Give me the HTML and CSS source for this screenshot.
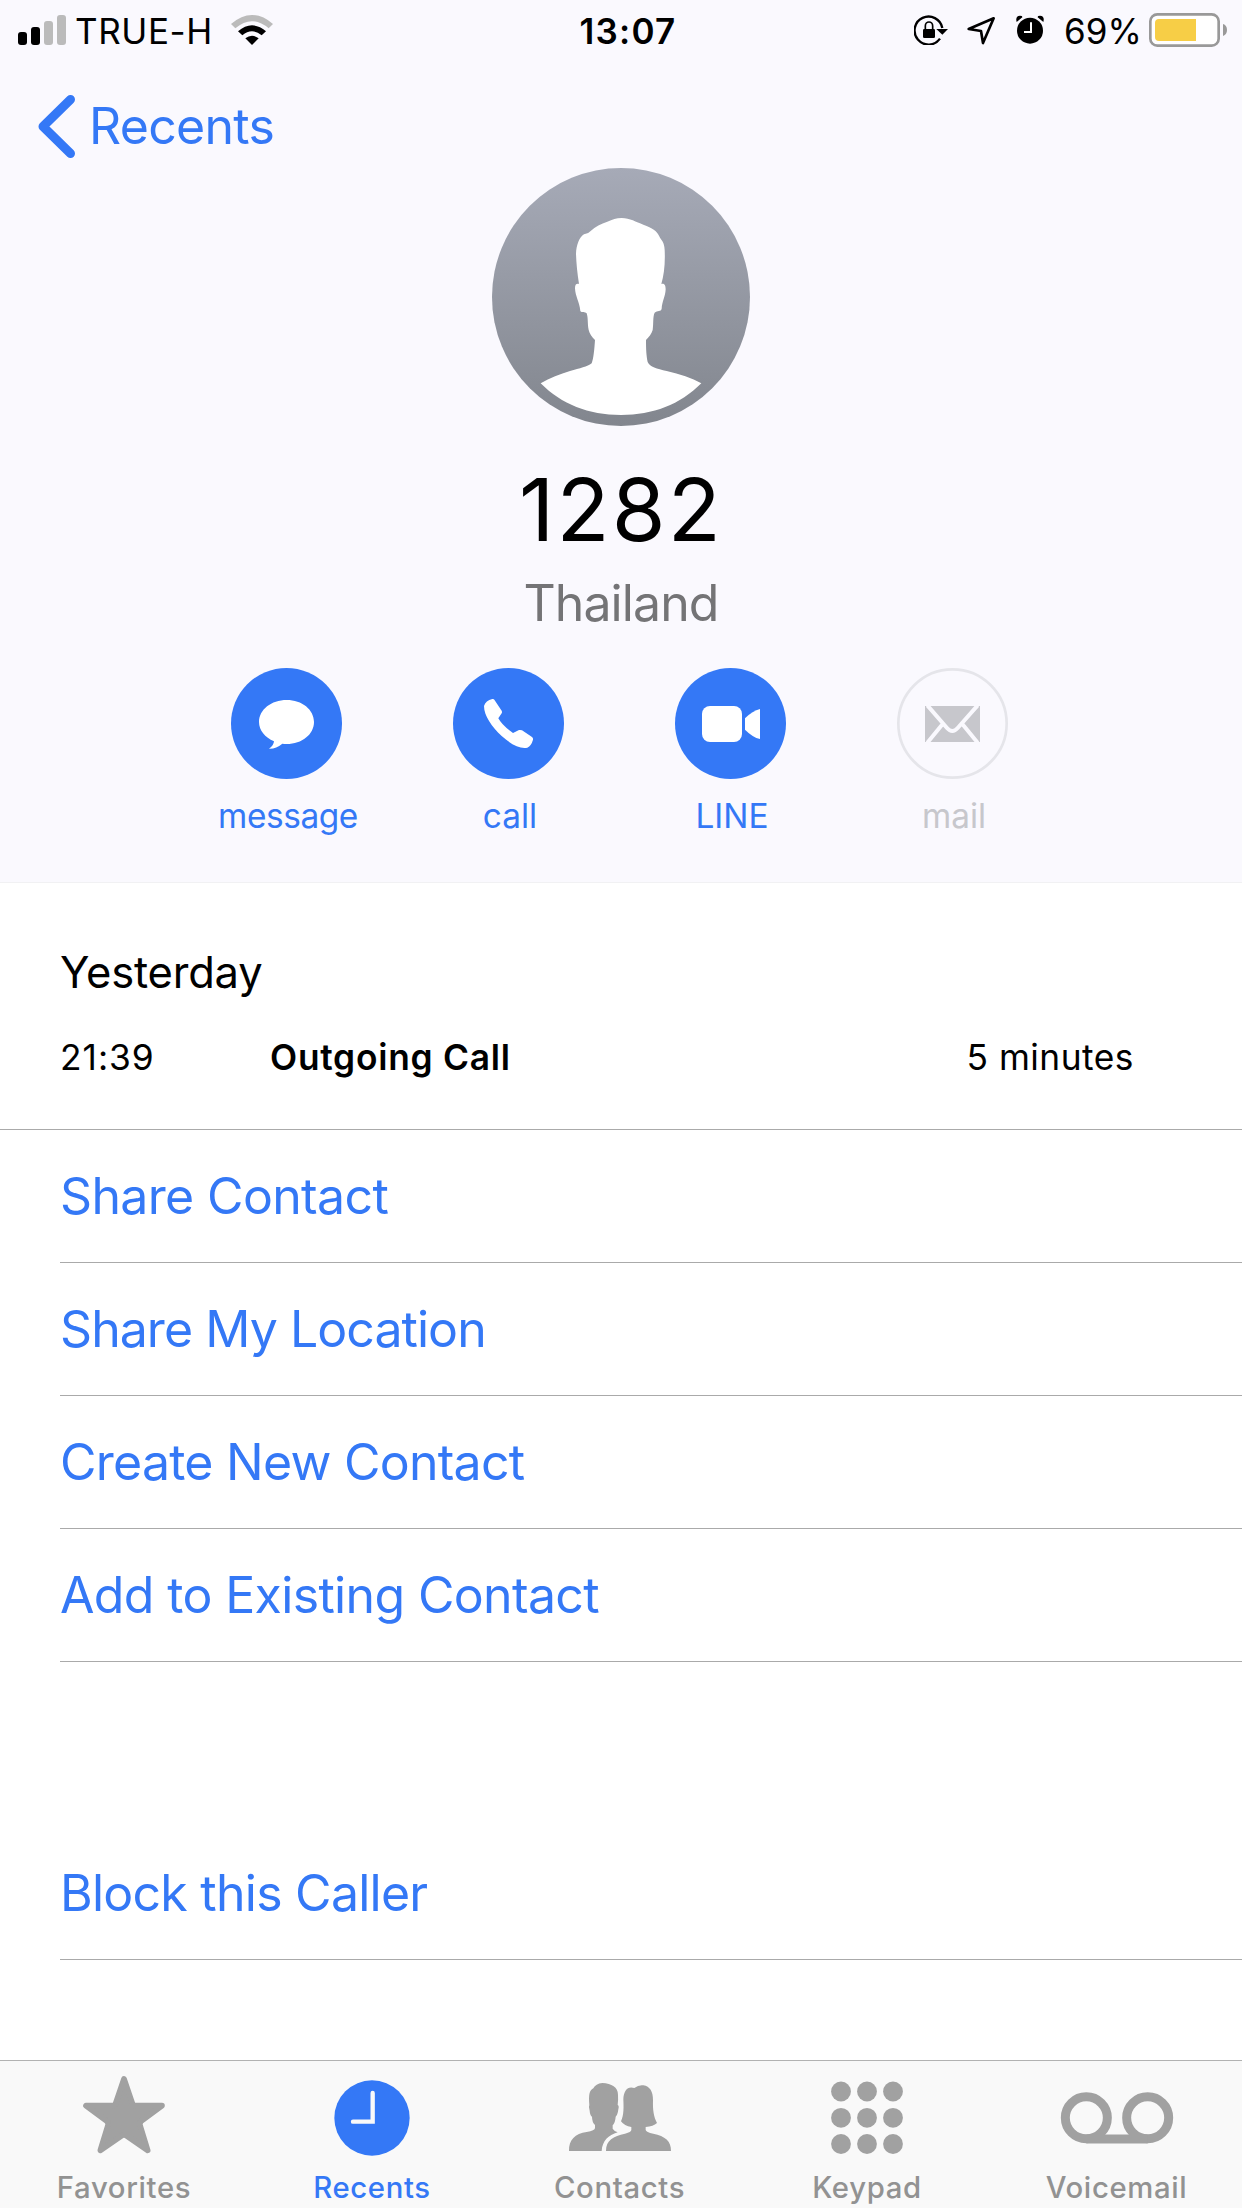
FILE: index.html
```
<!DOCTYPE html>
<html lang="en">
<head>
<meta charset="UTF-8">
<meta name="viewport" content="width=device-width, initial-scale=1.0">
<link rel="stylesheet" href="styles.css">
<title>Recents</title>
</head>
<body>
<div class="phone">
  <header class="header">
    <div class="status-bar">
      <div class="status-left">
        <svg class="signal" width="48" height="30" viewBox="0 0 48 30">
          <rect x="0" y="17" width="9" height="13" rx="3"/>
          <rect x="13" y="12" width="9" height="18" rx="3"/>
          <rect x="26" y="6" width="9" height="24" rx="3" fill="#bbb"/>
          <rect x="39" y="0" width="9" height="30" rx="3" fill="#bbb"/>
        </svg>
        <span class="carrier">TRUE-H</span>
        <svg class="wifi" width="42" height="30" viewBox="693 45 126 90">
          <path d="M693 72 Q756 18 819 72 L806 85 Q756 42 706 85 Z" fill="#bbb"/>
          <path d="M714 94 Q756 58 798 94 L785 106 Q756 82 727 106 Z"/>
          <path d="M736 115 Q756 99 776 115 L756 135 Z"/>
        </svg>
      </div>
      <div class="time">13:07</div>
      <div class="status-right">
        <svg class="lock" width="34" height="30" viewBox="162 45 102 90">
          <path d="M240 116 A42 42 0 1 1 247 84" fill="none" stroke="#000" stroke-width="7"/>
          <path d="M229 87 H264 L247 104 Z"/>
          <rect x="189" y="87" width="36" height="27" rx="4"/>
          <path d="M196 90 V78 a11 12 0 0 1 22 0 V90" fill="none" stroke="#000" stroke-width="5"/>
        </svg>
        <svg class="location" width="29" height="29" viewBox="321 48 87 87">
          <path d="M326 87 L401 55 L369 129 L363 93 Z" fill="none" stroke="#000" stroke-width="8" stroke-linejoin="round"/>
        </svg>
        <svg class="alarm" width="28" height="29" viewBox="468 46 84 87">
          <circle cx="510" cy="93" r="39"/>
          <path d="M470 67 Q465 49 480 48 Q488 48 487 53 Z M550 67 Q555 49 540 48 Q532 48 533 53 Z"/>
          <path d="M513 68 V97 H492" fill="none" stroke="#fff" stroke-width="6"/>
        </svg>
        <span class="percent">69%</span>
        <svg class="battery" width="79" height="34" viewBox="867 39 237 102">
          <rect x="871" y="43" width="205" height="94" rx="21" fill="#fff" stroke="#999" stroke-width="8"/>
          <path d="M1008 57 V123 H897 Q885 123 885 111 V69 Q885 57 897 57 Z" fill="#f7ce46"/>
          <path d="M1089 72 Q1101 76 1101 90 Q1101 104 1089 108 Z" fill="#999"/>
        </svg>
      </div>
    </div>

    <div class="nav">
      <svg width="37" height="63" viewBox="0 0 37 63">
        <path d="M32.5 4.5 L5 31.5 L32.5 58.5" fill="none" stroke="#3478f6" stroke-width="9" stroke-linecap="round" stroke-linejoin="round"/>
      </svg>
      <span class="back">Recents</span>
    </div>

    <div class="profile">
      <svg class="avatar" width="258" height="258" viewBox="66 54 774 774">
        <defs>
          <linearGradient id="shade" x1="0" y1="0" x2="0" y2="1">
            <stop offset="0" stop-color="#a6aab7"/>
            <stop offset="1" stop-color="#82868e"/>
          </linearGradient>
        </defs>
        <circle cx="453" cy="441" r="387" fill="url(#shade)"/>
        <path fill="#fff" d="M455 204 C480 204 498 216 520 224 C548 234 560 242 567 257 C574 272 583 274 584 300 C586 340 582 375 574 402 C582 400 587 404 587 418 C586 440 576 455 575 476 C573 486 562 480 554 488 C548 500 551 520 548 540 C545 552 536 562 528 570 C528 598 529 618 533 636 C540 652 560 656 590 663 C630 672 665 684 694 700 C630 764 550 795 453 795 C355 795 275 763 212 700 C240 684 270 672 300 663 C330 655 352 650 365 640 C371 625 373 598 375 570 C366 562 358 550 356 540 C352 520 355 505 350 490 C345 484 336 490 331 483 C328 455 316 440 315 415 C315 404 319 400 327 402 C322 370 319 340 318 312 C319 284 328 262 342 253 C350 250 354 251 362 243 C376 229 393 221 412 215 C428 209 438 204 455 204 Z"/>
      </svg>
      <h1 class="number">1282</h1>
      <p class="place">Thailand</p>
    </div>

    <div class="actions">
      <div class="action">
        <svg width="111" height="111" viewBox="93 54 333 333">
          <circle cx="259.500" cy="220.500" r="166.500" fill="#3478f6"/>
          <path fill="#fff" d="M260 150 C306 150 342 179 342 216 C342 253 306 282 260 282 Q253 282 247 281 Q228 297 207 296 Q221 287 222 274 C195 262 177 241 177 216 C177 179 214 150 260 150 Z"/>
        </svg>
        <span class="action-label message">message</span>
      </div>
      <div class="action">
        <svg width="111" height="111" viewBox="759 54 333 333">
          <circle cx="925.500" cy="220.500" r="166.500" fill="#3478f6"/>
          <path fill="#fff" d="M883 149 L905 182 Q907 186 905 190 L895 205 Q906 226 939 249 L957 240 Q962 239 966 241 L996 261 Q1000 264 999 269 Q994 287 982 293 C960 297 935 285 905 258 C875 230 852 197 852 168 Q857 152 877 147 Q881 146 883 149 Z"/>
        </svg>
        <span class="action-label">call</span>
      </div>
      <div class="action">
        <svg width="111" height="111" viewBox="165 54 333 333">
          <circle cx="331.500" cy="220.500" r="166.500" fill="#3478f6"/>
          <rect x="246" y="168" width="120" height="108" rx="24" fill="#fff"/>
          <path fill="#fff" d="M375 205 Q398 182 420 177 V267 Q398 262 375 239 Z"/>
        </svg>
        <span class="action-label">LINE</span>
      </div>
      <div class="action disabled">
        <svg width="111" height="111" viewBox="831 54 333 333">
          <circle cx="997.500" cy="220.500" r="162.500" fill="none" stroke="#e5e5ea" stroke-width="8"/>
          <rect x="915" y="168" width="165" height="108" fill="#c7c7cc"/>
          <path d="M922 166 L981 234 Q997 252 1013 234 L1073 166 M968 222 L922 278 M1027 222 L1073 278" fill="none" stroke="#faf9fe" stroke-width="12"/>
        </svg>
        <span class="action-label">mail</span>
      </div>
    </div>
  </header>

  <section class="history">
    <h2 class="day">Yesterday</h2>
    <div class="call-row">
      <span class="call-time">21:39</span>
      <span class="call-type">Outgoing Call</span>
      <span class="call-length">5 minutes</span>
    </div>
  </section>

  <ul class="options">
    <li class="share">Share Contact</li>
    <li class="location-row">Share My Location</li>
    <li class="create">Create New Contact</li>
    <li class="existing">Add to Existing Contact</li>
  </ul>
  <ul class="options block-list">
    <li class="block">Block this Caller</li>
  </ul>

  <nav class="tab-bar">
    <div class="tab">
      <svg width="120" height="87" viewBox="192 90 360 261">
        <path d="M372 117 L397 190 Q400 197 407 197 L486 197 L424 243 Q418 248 420 256 L443 331 L379 287 Q372 282 365 287 L301 331 L324 256 Q326 248 320 243 L258 197 L337 197 Q344 197 347 190 Z" fill="#a1a1a1" stroke="#a1a1a1" stroke-width="17" stroke-linejoin="round"/>
      </svg>
      <span class="tab-label">Favorites</span>
    </div>
    <div class="tab active">
      <svg width="120" height="87" viewBox="936 90 360 261">
        <circle cx="1116" cy="234" r="113" fill="#3478f6"/>
        <path d="M1059 245 H1118 V159" fill="none" stroke="#f9f9f9" stroke-width="13" stroke-linecap="round"/>
      </svg>
      <span class="tab-label">Recents</span>
    </div>
    <div class="tab">
      <svg width="120" height="87" viewBox="300 90 360 261">
        <g fill="#a1a1a1">
          <path d="M327 333 C326 300 345 281 380 276 Q405 272 405 264 V255 Q396 246 396 230 Q390 226 389 212 Q385 200 388 195 C386 165 387 153 400 145 Q407 131 427 129 C455 130 474 142 474 164 Q475 180 473 195 Q478 197 475 208 Q473 225 467 230 Q466 247 458 256 V266 Q462 273 473 277 C445 285 427 303 425 333 Z"/>
          <path d="M438 333 C438 300 460 289 495 281 Q514 276 514 270 V261 Q493 258 483 244 C492 225 491 200 490 178 C491 152 503 137 523 144 Q536 134 550 136 C570 139 579 155 579 180 C578 210 581 230 591 249 Q580 259 557 261 V270 Q558 277 580 281 C615 288 634 303 633 333 Z"/>
        </g>
      </svg>
      <span class="tab-label">Contacts</span>
    </div>
    <div class="tab">
      <svg width="120" height="87" viewBox="0 0 120 87">
        <g fill="#a1a1a1">
          <circle cx="34" cy="21.500" r="9.900"/><circle cx="60" cy="21.500" r="9.900"/><circle cx="86" cy="21.500" r="9.900"/>
          <circle cx="34" cy="47.800" r="9.900"/><circle cx="60" cy="47.800" r="9.900"/><circle cx="86" cy="47.800" r="9.900"/>
          <circle cx="34" cy="74" r="9.900"/><circle cx="60" cy="74" r="9.900"/><circle cx="86" cy="74" r="9.900"/>
        </g>
      </svg>
      <span class="tab-label">Keypad</span>
    </div>
    <div class="tab">
      <svg width="120" height="87" viewBox="591 90 360 261">
        <g fill="none" stroke="#a1a1a1" stroke-width="27">
          <circle cx="679" cy="233.500" r="63"/>
          <circle cx="863" cy="233.500" r="63"/>
          <path d="M679 297 H863"/>
        </g>
      </svg>
      <span class="tab-label">Voicemail</span>
    </div>
  </nav>
</div>
</body>
</html>
```
FILE: styles.css
```
* {
  box-sizing: border-box;
}

body {
  margin: 0;
  font-family: Inter, "Liberation Sans", sans-serif;
  color: #000;
  background-color: #fff;
}

h1, h2, p, ul {
  margin: 0;
  padding: 0;
  font-weight: 400;
}

svg {
  display: block;
  flex-shrink: 0;
}

.phone {
  width: 1242px;
  height: 2208px;
  display: flex;
  flex-direction: column;
  overflow: hidden;
}

.header {
  height: 883px;
  background-color: #faf9fe;
  border-bottom: 1px solid #f1f1f3;
}

/* status bar */
.status-bar {
  display: grid;
  grid-template-columns: 1fr auto 1fr;
  height: 60px;
  padding: 0 14px 0 18px;
  font-size: 35px;
  line-height: 63px;
}

.status-left, .status-right {
  display: flex;
}

.status-right {
  justify-content: flex-end;
}

.signal, .wifi, .lock {
  margin-top: 15px;
}

.carrier {
  width: 153px;
  margin-left: 9px;
  margin-right: 3px;
  letter-spacing: 0.6px;
}

.time {
  padding-left: 10px;
  font-weight: 600;
  letter-spacing: 1.2px;
}

.location {
  margin: 16px 20px 0 19px;
}

.alarm {
  margin-top: 15px;
}

.percent {
  width: 75px;
  margin-left: 20px;
  letter-spacing: 0;
}

.battery {
  margin: 13px 0 0 10px;
}

.nav {
  display: flex;
  align-items: center;
  height: 108px;
  padding: 25px 0 0 38px;
  color: #3478f6;
  font-size: 50px;
}

.back {
  margin-left: 14px;
  line-height: 63px;
  letter-spacing: -0.7px;
}

.profile {
  display: flex;
  flex-direction: column;
  align-items: center;
}

.number {
  margin-top: 29px;
  font-size: 87px;
  line-height: 110px;
  letter-spacing: 2.2px;
}

.place {
  margin-top: 8px;
  color: #747476;
  font-size: 50px;
  line-height: 60px;
  letter-spacing: -0.9px;
}

.actions {
  display: flex;
  justify-content: center;
  margin-top: 35px;
}

.action {
  display: flex;
  flex-direction: column;
  align-items: center;
  width: 222px;
  color: #3478f6;
}

.action svg {
  margin-right: 3px;
}

.action-label {
  margin-top: 17px;
  font-size: 33.4px;
  line-height: 40px;
}

.message {
  letter-spacing: -0.4px;
}

.disabled {
  color: #c7c7cc;
}

/* call history */
.history {
  height: 247px;
  padding: 59px 108px 0 60px;
  border-bottom: 1px solid #aaa;
}

.day {
  font-size: 43.5px;
  line-height: 60px;
  letter-spacing: -0.2px;
}

.call-row {
  display: flex;
  margin-top: 36px;
  font-size: 35.3px;
  line-height: 40px;
}

.call-time {
  width: 210px;
  letter-spacing: 1px;
}

.call-type {
  font-weight: 600;
  letter-spacing: 0.75px;
}

.call-length {
  margin-left: auto;
  letter-spacing: 0.5px;
}

.options {
  list-style: none;
  padding-left: 60px;
  color: #3478f6;
  font-size: 50px;
}

.options li {
  height: 133px;
  border-bottom: 1px solid #aaa;
  line-height: 133px;
  letter-spacing: -0.65px;
}

.options .location-row {
  letter-spacing: -0.95px;
}

.options .create, .options .block {
  letter-spacing: -0.75px;
}

.block-list {
  margin-top: 165px;
}

/* tab bar */
.tab-bar {
  display: grid;
  grid-template-columns: 248px 248px 247px 248px 251px;
  height: 148px;
  margin-top: auto;
  padding-top: 9px;
  border-top: 1px solid #b2b2b2;
  background-color: #f9f9f9;
}

.tab {
  display: flex;
  flex-direction: column;
  align-items: center;
  color: #929292;
}

.tab-label {
  margin-top: 11px;
  font-size: 29.3px;
  font-weight: 500;
  line-height: 40px;
  letter-spacing: 0.65px;
}

.active {
  color: #3478f6;
}
```
